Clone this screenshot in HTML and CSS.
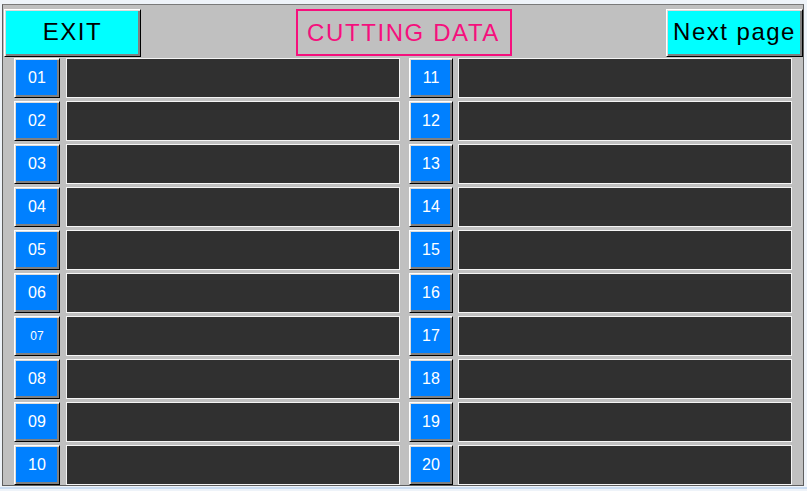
FILE: index.html
```html
<!DOCTYPE html>
<html>
<head>
<meta charset="utf-8">
<link rel="stylesheet" href="styles.css">
</head>
<body>
<div class="panel">
  <div class="header">
    <div class="btn cyan">EXIT</div>
    <div class="title">CUTTING DATA</div>
    <div class="btn cyan">Next page</div>
  </div>
  <div class="rows">
    <div class="row"><div class="num">01</div><div class="field"></div><div class="num">11</div><div class="field"></div></div>
    <div class="row"><div class="num">02</div><div class="field"></div><div class="num">12</div><div class="field"></div></div>
    <div class="row"><div class="num">03</div><div class="field"></div><div class="num">13</div><div class="field"></div></div>
    <div class="row"><div class="num">04</div><div class="field"></div><div class="num">14</div><div class="field"></div></div>
    <div class="row"><div class="num">05</div><div class="field"></div><div class="num">15</div><div class="field"></div></div>
    <div class="row"><div class="num">06</div><div class="field"></div><div class="num">16</div><div class="field"></div></div>
    <div class="row"><div class="num small">07</div><div class="field"></div><div class="num">17</div><div class="field"></div></div>
    <div class="row"><div class="num">08</div><div class="field"></div><div class="num">18</div><div class="field"></div></div>
    <div class="row"><div class="num">09</div><div class="field"></div><div class="num">19</div><div class="field"></div></div>
    <div class="row"><div class="num">10</div><div class="field"></div><div class="num">20</div><div class="field"></div></div>
  </div>
</div>
<div class="baseline"></div>
</body>
</html>
```

FILE: styles.css
```css
html, body {
  margin: 0;
  padding: 0;
}
body {
  background: #eef3f9;
  font-family: "Liberation Sans", Arial, sans-serif;
  padding-top: 4px;
  padding-left: 2px;
}
.panel {
  width: 800px;
  height: 480px;
  background: #c0c0c0;
  border: 1px solid #5e5e5e;
  border-top-color: #7a7a7a;
  display: flex;
  flex-direction: column;
}
.header {
  display: flex;
  justify-content: space-between;
  padding: 4px 0 0 1px;
  height: 48px;
}
.btn {
  box-sizing: border-box;
  width: 137px;
  height: 48px;
  display: flex;
  align-items: center;
  justify-content: center;
  font-size: 24px;
  letter-spacing: 1.5px;
  color: #000;
}
.cyan, .num {
  border: 1px solid;
  border-color: #ffffff #000000 #000000 #ffffff;
  box-shadow: inset 1px 1px 0 #dcdcdc, inset -2px -2px 0 #808080;
}
.cyan {
  background: #00ffff;
  padding-bottom: 2px;
}
.title {
  box-sizing: border-box;
  width: 216px;
  height: 47px;
  border: 2px solid #f5107d;
  color: #f5107d;
  font-size: 24px;
  letter-spacing: 1.6px;
  display: flex;
  align-items: center;
  justify-content: center;
  padding-top: 1px;
}
.rows {
  display: flex;
  flex-direction: column;
  gap: 3px;
  padding: 1px 0 0 11px;
}
.row {
  display: grid;
  grid-template-columns: 46px 334px 46px 334px;
  column-gap: 6px;
  height: 40px;
}
.row .num:nth-child(3) {
  margin-left: 3px;
  margin-right: -1px;
}
.num {
  box-sizing: border-box;
  background: #0080ff;
  color: #ffffff;
  font-size: 16px;
  display: flex;
  align-items: center;
  justify-content: center;
  padding-bottom: 1px;
}
.num.small {
  font-size: 12px;
}
.field {
  box-sizing: border-box;
  background: #303030;
  border: 1px solid #f4f4f4;
}
.baseline {
  margin-top: 1px;
  margin-left: -2px;
  height: 2px;
  width: 807px;
  background: #cadcf1;
}
```
